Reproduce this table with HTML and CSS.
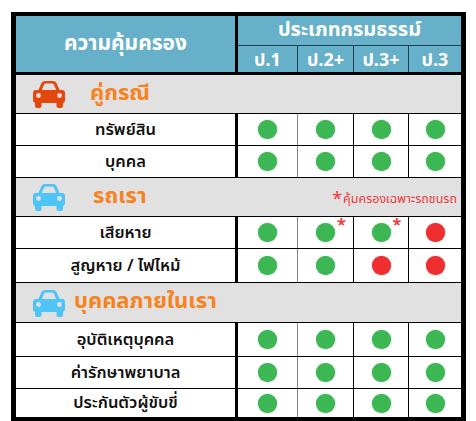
FILE: index.html
```html
<!DOCTYPE html>
<html lang="th">
<head>
<meta charset="utf-8">
<title>ความคุ้มครอง</title>
<link rel="stylesheet" href="styles.css">
</head>
<body>
<div class="chart">
  <div class="head">
    <div class="head-title">ความคุ้มครอง</div>
    <div class="head-type">ประเภทกรมธรรม์</div>
    <div class="plan">ป.1</div>
    <div class="plan sep">ป.2+</div>
    <div class="plan sep">ป.3+</div>
    <div class="plan sep">ป.3</div>
  </div>

  <div class="section">
    <svg class="car car-red" viewBox="0 0 32 28" aria-hidden="true">
      <path d="M5 11 L8.5 3 Q9.5 1 12 1 H20 Q22.5 1 23.5 3 L27 11 Z" fill="currentColor"/>
      <path d="M8.6 10.5 L11.2 4.6 Q11.7 3.6 12.8 3.6 H19.2 Q20.3 3.6 20.8 4.6 L23.4 10.5 Z" fill="#e1e1e1"/>
      <rect x="0" y="10" width="32" height="13" rx="3" fill="currentColor"/>
      <circle cx="5.5" cy="15.5" r="2.4" fill="#e1e1e1"/>
      <circle cx="26.5" cy="15.5" r="2.4" fill="#e1e1e1"/>
      <rect x="2" y="20" width="6.5" height="8" rx="2" fill="currentColor"/>
      <rect x="23.5" y="20" width="6.5" height="8" rx="2" fill="currentColor"/>
    </svg>
    <span class="section-title gap-wide">คู่กรณี</span>
  </div>
  <div class="row">
    <div class="label">ทรัพย์สิน</div>
    <div class="cell"><span class="dot"></span></div>
    <div class="cell sep-soft"><span class="dot"></span></div>
    <div class="cell sep"><span class="dot"></span></div>
    <div class="cell sep"><span class="dot"></span></div>
  </div>
  <div class="row">
    <div class="label">บุคคล</div>
    <div class="cell"><span class="dot"></span></div>
    <div class="cell sep-soft"><span class="dot"></span></div>
    <div class="cell sep"><span class="dot"></span></div>
    <div class="cell sep"><span class="dot"></span></div>
  </div>

  <div class="section">
    <svg class="car car-blue" viewBox="0 0 32 28" aria-hidden="true">
      <path d="M5 11 L8.5 3 Q9.5 1 12 1 H20 Q22.5 1 23.5 3 L27 11 Z" fill="currentColor"/>
      <path d="M8.6 10.5 L11.2 4.6 Q11.7 3.6 12.8 3.6 H19.2 Q20.3 3.6 20.8 4.6 L23.4 10.5 Z" fill="#e1e1e1"/>
      <rect x="0" y="10" width="32" height="13" rx="3" fill="currentColor"/>
      <circle cx="5.5" cy="15.5" r="2.4" fill="#e1e1e1"/>
      <circle cx="26.5" cy="15.5" r="2.4" fill="#e1e1e1"/>
      <rect x="2" y="20" width="6.5" height="8" rx="2" fill="currentColor"/>
      <rect x="23.5" y="20" width="6.5" height="8" rx="2" fill="currentColor"/>
    </svg>
    <span class="section-title gap-wider">รถเรา</span>
    <span class="note"><span class="note-star">*</span>คุ้มครองเฉพาะรถชนรถ</span>
  </div>
  <div class="row">
    <div class="label">เสียหาย</div>
    <div class="cell"><span class="dot"></span></div>
    <div class="cell sep-soft"><span class="dot"><span class="star">*</span></span></div>
    <div class="cell sep"><span class="dot"><span class="star">*</span></span></div>
    <div class="cell sep"><span class="dot dot-red"></span></div>
  </div>
  <div class="row row-tall">
    <div class="label">สูญหาย / ไฟไหม้</div>
    <div class="cell"><span class="dot"></span></div>
    <div class="cell sep-soft"><span class="dot"></span></div>
    <div class="cell sep"><span class="dot dot-red"></span></div>
    <div class="cell sep"><span class="dot dot-red"></span></div>
  </div>

  <div class="section section-tall">
    <svg class="car car-blue" viewBox="0 0 32 28" aria-hidden="true">
      <path d="M5 11 L8.5 3 Q9.5 1 12 1 H20 Q22.5 1 23.5 3 L27 11 Z" fill="currentColor"/>
      <path d="M8.6 10.5 L11.2 4.6 Q11.7 3.6 12.8 3.6 H19.2 Q20.3 3.6 20.8 4.6 L23.4 10.5 Z" fill="#e1e1e1"/>
      <rect x="0" y="10" width="32" height="13" rx="3" fill="currentColor"/>
      <circle cx="5.5" cy="15.5" r="2.4" fill="#e1e1e1"/>
      <circle cx="26.5" cy="15.5" r="2.4" fill="#e1e1e1"/>
      <rect x="2" y="20" width="6.5" height="8" rx="2" fill="currentColor"/>
      <rect x="23.5" y="20" width="6.5" height="8" rx="2" fill="currentColor"/>
    </svg>
    <span class="section-title gap-narrow">บุคคลภายในเรา</span>
  </div>
  <div class="row row-tall">
    <div class="label">อุบัติเหตุบุคคล</div>
    <div class="cell"><span class="dot"></span></div>
    <div class="cell sep-soft"><span class="dot"></span></div>
    <div class="cell sep"><span class="dot"></span></div>
    <div class="cell sep"><span class="dot"></span></div>
  </div>
  <div class="row">
    <div class="label">ค่ารักษาพยาบาล</div>
    <div class="cell"><span class="dot"></span></div>
    <div class="cell sep-soft"><span class="dot"></span></div>
    <div class="cell sep"><span class="dot"></span></div>
    <div class="cell sep"><span class="dot"></span></div>
  </div>
  <div class="row row-last">
    <div class="label">ประกันตัวผู้ขับขี่</div>
    <div class="cell"><span class="dot"></span></div>
    <div class="cell sep-soft"><span class="dot"></span></div>
    <div class="cell sep"><span class="dot"></span></div>
    <div class="cell sep"><span class="dot"></span></div>
  </div>
</div>
</body>
</html>
```

FILE: styles.css
```css
* { box-sizing: border-box; }

html, body {
  margin: 0;
  padding: 0;
  background: #ffffff;
}

body {
  font-family: "Noto Sans Thai", "Noto Sans", "DejaVu Sans", sans-serif;
  padding: 12px 0 0 11px;
}

.chart {
  width: 455px;
  border-style: solid;
  border-color: #000;
  border-width: 4px 5px 5px 5px;
  background: #fff;
}

/* header */
.head {
  display: grid;
  grid-template-columns: 222px 59px 56px 55px 53px;
  grid-template-rows: 30px 26px;
  background: #67b0c9;
  color: #fff;
  border-bottom: 3px solid #000;
}

.head-title {
  grid-row: 1 / 3;
  border-right: 3px solid #000;
  display: flex;
  align-items: center;
  justify-content: center;
  font-size: 21px;
  font-weight: 700;
  padding-bottom: 2px;
}

.head-type {
  grid-column: 2 / 6;
  border-bottom: 1px solid #1f3f4a;
  display: flex;
  align-items: center;
  justify-content: center;
  font-size: 20px;
  font-weight: 700;
  padding-bottom: 1px;
}

.plan {
  display: flex;
  align-items: center;
  justify-content: center;
  font-size: 18px;
  font-weight: 700;
  line-height: 1;
  padding-top: 3px;
}

.plan.sep { border-left: 1px solid #1f3f4a; }

/* section bands */
.section {
  display: flex;
  align-items: center;
  height: 39px;
  background: #e1e1e1;
  border-bottom: 1px solid #000;
  padding: 0 4px 0 17px;
}

.section-tall { height: 40px; }

.car {
  width: 32px;
  height: 28px;
  flex: none;
}

.car-red { color: #e4470c; }
.car-blue { color: #4ec4f7; }

.section-title {
  color: #f7821e;
  font-size: 22px;
  font-weight: 700;
  padding-bottom: 2px;
}

.gap-wide { margin-left: 25px; }
.gap-wider { margin-left: 28px; }
.gap-narrow { margin-left: 9px; }

.note {
  margin-left: auto;
  align-self: flex-end;
  color: #ee3838;
  font-size: 12.5px;
  line-height: 1;
  padding-bottom: 7px;
}

.note-star {
  font-size: 18px;
  vertical-align: -2px;
  margin-right: 1px;
}

/* rows */
.row {
  display: grid;
  grid-template-columns: 222px 59px 56px 55px 53px;
  height: 32px;
  border-bottom: 1px solid #000;
}

.row-tall { height: 34px; }
.row-last { height: 28px; border-bottom: 0; }

.label {
  border-right: 3px solid #000;
  display: flex;
  align-items: center;
  justify-content: center;
  font-size: 16.5px;
  font-weight: 600;
  color: #111;
  padding-bottom: 1px;
}

.cell {
  display: flex;
  align-items: center;
  justify-content: center;
}

.cell.sep { border-left: 1px solid #000; }
.cell.sep-soft { border-left: 1px solid #8a8a8a; }

.dot {
  position: relative;
  width: 19px;
  height: 19px;
  border-radius: 50%;
  background: #3db654;
  box-shadow: 0 0 1px #3db654;
}

.dot-red {
  background: #ef2f2f;
  box-shadow: 0 0 1px #ef2f2f;
}

.star {
  position: absolute;
  left: 21px;
  top: -6px;
  color: #ee3838;
  font-size: 16px;
  font-weight: 700;
  line-height: 1;
}
```
